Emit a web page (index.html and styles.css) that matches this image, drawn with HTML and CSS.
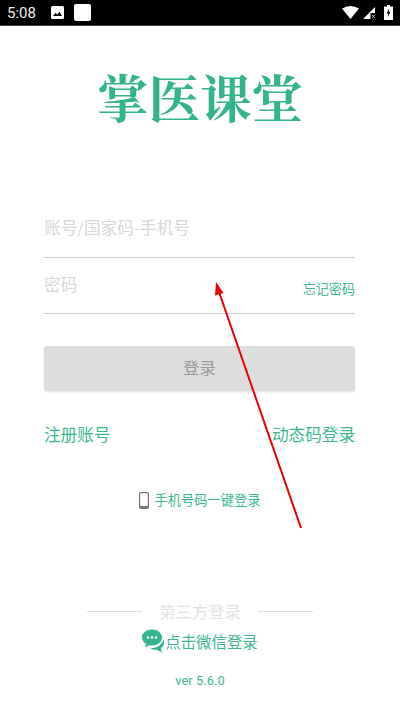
FILE: index.html
```html
<!DOCTYPE html>
<html lang="zh-CN">
<head>
  <meta charset="UTF-8">
  <title>掌医课堂</title>
  <link rel="stylesheet" href="styles.css">
</head>
<body>

  <div class="status-bar">
    <span class="status-time">5:08</span>
    <svg class="status-pic" width="13" height="13" viewBox="0 0 13 13">
      <rect width="13" height="13" rx="1.5" fill="#fff"/>
      <path d="M2 10 L4.5 7 L6 8.5 L8.5 5.8 L11 10 Z" fill="#000"/>
    </svg>
    <span class="status-square"></span>
    <span class="status-right">
      <svg width="17" height="13" viewBox="0 0 17 13"><path d="M0 2.5 Q8.5 -2.5 17 2.5 L8.5 13 Z" fill="#fff"/></svg>
      <svg width="13" height="13" viewBox="0 0 13 13">
        <path d="M0 13 L12 1 V7 H7.5 V13 Z" fill="#fff"/>
        <path d="M8.8 8.8 L12 12 M12 8.8 L8.8 12" stroke="#bbb" stroke-width="1"/>
      </svg>
      <svg class="status-battery" width="9" height="15" viewBox="0 0 9 15">
        <path d="M3 0 H6 V1.5 H9 V15 H0 V1.5 H3 Z" fill="#fff"/>
        <path d="M5.2 3.5 L2.6 8.6 H4.2 L3.8 12 L6.4 6.9 H4.8 Z" fill="#000"/>
      </svg>
    </span>
  </div>

  <h1 class="logo">掌医课堂</h1>

  <div class="form">
    <div class="field">
      <span class="placeholder">账号/国家码-手机号</span>
    </div>
    <div class="field field-password">
      <span class="placeholder">密码</span>
      <a class="forgot">忘记密码</a>
    </div>
    <button class="login-button">登录</button>
    <div class="links">
      <a>注册账号</a>
      <a>动态码登录</a>
    </div>
  </div>

  <div class="one-key">
    <svg width="10" height="17" viewBox="0 0 10 17">
      <rect x="0.6" y="0.6" width="8.8" height="15.8" rx="1.5" fill="none" stroke="#777" stroke-width="1.2"/>
      <rect x="1" y="14" width="8" height="2" fill="#777"/>
    </svg>
    <a>手机号码一键登录</a>
  </div>

  <div class="third-party">
    <div class="third-title">
      <span class="third-line"></span>
      <span>第三方登录</span>
      <span class="third-line"></span>
    </div>
    <div class="wechat">
      <svg width="23" height="24" viewBox="0 0 23 24">
        <path d="M21.5 10 C22.8 14 21.5 17.5 19 19 L19.8 23.5 L15 20.8 C12.5 21 10 20.4 8.5 19 C14 19.5 20.5 16 21.5 10 Z" fill="#35b38c"/>
        <path d="M10 0.5 C15.5 0.5 20 4 20 8.5 C20 13 15.5 16.5 10 16.5 C9 16.5 8 16.4 7.2 16.2 L3.5 18.5 L3.9 14.6 C1.5 13.2 0 11 0 8.5 C0 4 4.5 0.5 10 0.5 Z" fill="#35b38c"/>
        <circle cx="6" cy="8.5" r="1.2" fill="#fff"/>
        <circle cx="10" cy="8.5" r="1.2" fill="#fff"/>
        <circle cx="14" cy="8.5" r="1.2" fill="#fff"/>
      </svg>
      <a>点击微信登录</a>
    </div>
    <div class="version">ver 5.6.0</div>
  </div>

  <svg class="annotation" width="400" height="711" viewBox="0 0 400 711">
    <line x1="301" y1="528" x2="219" y2="292" stroke="#e60000" stroke-width="2"/>
    <path d="M216 282 L223.5 293 L215 295.5 Z" fill="#e60000"/>
  </svg>

</body>
</html>
```

FILE: styles.css
```css
* {
  box-sizing: border-box;
}
html, body {
  margin: 0;
  padding: 0;
}
body {
  position: relative;
  width: 400px;
  height: 711px;
  overflow: hidden;
  background-color: #fff;
  font-family: "Noto Sans CJK SC", "Noto Sans", sans-serif;
  color: #3fb792;
}
.status-bar {
  display: flex;
  align-items: center;
  height: 26px;
  padding: 0 7px;
  background-color: #000;
  border-bottom: 1px solid #444;
}
.status-time {
  width: 44px;
  color: #eee;
  font-family: Roboto, sans-serif;
  font-size: 15px;
}
.status-square {
  width: 17px;
  height: 17px;
  margin-left: 10px;
  background-color: #fff;
  border-radius: 2px;
}
.status-right {
  display: flex;
  align-items: center;
  gap: 4px;
  margin-left: auto;
}
.status-battery {
  margin-left: 4px;
}
.logo {
  margin: 37px 0 0 0;
  text-align: center;
  font-family: "Noto Serif CJK SC", "Noto Sans CJK SC", serif;
  font-size: 51.5px;
  font-weight: 700;
  line-height: 66px;
  color: #35b38c;
}
.form {
  margin: 0 45px 0 44px;
  padding-top: 83px;
}
.field {
  display: flex;
  justify-content: space-between;
  height: 46px;
  border-bottom: 1px solid #ccc;
  padding-top: 3px;
}
.field-password {
  height: 56px;
  padding-top: 14px;
}
.placeholder {
  color: #d8d8d8;
  font-size: 16.7px;
  line-height: 24px;
}
.forgot {
  align-self: flex-end;
  margin-bottom: 14px;
  font-size: 13.1px;
  line-height: 20px;
}
.login-button {
  display: block;
  width: 100%;
  height: 45px;
  margin-top: 32px;
  padding-bottom: 5px;
  border: none;
  border-radius: 3px;
  background-color: #dddddd;
  box-shadow: 0 1px 2px rgba(0,0,0,0.12);
  color: #999;
  font-family: inherit;
  font-size: 16.4px;
}
.links {
  display: flex;
  justify-content: space-between;
  margin-top: 31px;
  font-size: 16.6px;
  line-height: 24px;
}
.one-key {
  display: flex;
  align-items: center;
  justify-content: center;
  gap: 5px;
  margin-top: 44px;
  font-size: 13.25px;
  line-height: 20px;
}
.third-party {
  margin-top: 89px;
  text-align: center;
}
.third-title {
  display: flex;
  align-items: center;
  justify-content: center;
  gap: 17px;
  color: #e2e2e2;
  font-size: 16.4px;
  line-height: 24px;
}
.third-line {
  width: 55px;
  height: 1px;
  background-color: #dedede;
}
.wechat {
  display: flex;
  align-items: center;
  justify-content: center;
  margin-top: 6px;
  font-size: 15.4px;
  line-height: 24px;
}
.version {
  margin-top: 19px;
  font-family: Roboto, sans-serif;
  font-size: 13px;
  line-height: 18px;
}
.annotation {
  position: absolute;
  top: 0;
  left: 0;
}
```
